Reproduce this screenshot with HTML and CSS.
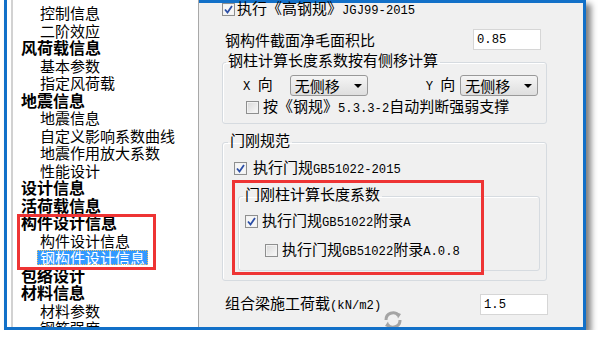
FILE: index.html
```html
<!DOCTYPE html>
<html lang="zh">
<head>
    <meta charset="UTF-8">
    <meta name="viewport" content="width=device-width, initial-scale=1.0">
    <title>钢构件设计信息</title>
    <link rel="stylesheet" href="styles.css">
</head>
<body>
    <div class="frame">
        <div class="tree">
            <ul class="nodes">
                <li class="child">控制信息</li>
                <li class="child">二阶效应</li>
                <li class="top">风荷载信息</li>
                <li class="child">基本参数</li>
                <li class="child">指定风荷载</li>
                <li class="top">地震信息</li>
                <li class="child">地震信息</li>
                <li class="child">自定义影响系数曲线</li>
                <li class="child">地震作用放大系数</li>
                <li class="child">性能设计</li>
                <li class="top">设计信息</li>
                <li class="top">活荷载信息</li>
                <li class="top">构件设计信息</li>
                <li class="child">构件设计信息</li>
                <li class="child"><span class="selected">钢构件设计信息</span></li>
                <li class="top">包络设计</li>
                <li class="top">材料信息</li>
                <li class="child">材料参数</li>
                <li class="child">钢筋强度</li>
            </ul>
            <div class="mark mark-tree"></div>
        </div>

        <div class="panel">
            <div class="row row-first">
                <span class="cb checked"><svg width="11" height="11" viewBox="0 0 11 11"><path d="M2 5.5 L4.5 8.5 L9 2" fill="none" stroke="#2b4ea6" stroke-width="1.8"/></svg></span>
                <span>执行《高钢规》<span class="en">JGJ99-2015</span></span>
            </div>

            <div class="row row-field">
                <span>钢构件截面净毛面积比</span>
                <span class="field"><span class="en">0.85</span></span>
            </div>

            <fieldset class="group group-side">
                <legend>钢柱计算长度系数按有侧移计算</legend>
                <div class="row row-combo">
                    <span class="axis"><span class="en">X </span>向</span>
                    <span class="combo combo-x">无侧移<i class="arrow"></i></span>
                    <span class="axis axis-y"><span class="en">Y </span>向</span>
                    <span class="combo combo-y">无侧移<i class="arrow"></i></span>
                </div>
                <div class="row row-check row-brace">
                    <span class="cb"></span>
                    <span>按《钢规》<span class="en">5.3.3-2</span>自动判断强弱支撑</span>
                </div>
            </fieldset>

            <fieldset class="group group-portal">
                <legend>门刚规范</legend>
                <div class="row row-check row-portal">
                    <span class="cb checked"><svg width="11" height="11" viewBox="0 0 11 11"><path d="M2 5.5 L4.5 8.5 L9 2" fill="none" stroke="#2b4ea6" stroke-width="1.8"/></svg></span>
                    <span>执行门规<span class="en">GB51022-2015</span></span>
                </div>
                <fieldset class="group group-inner">
                    <legend>门刚柱计算长度系数</legend>
                    <div class="row row-check row-appendix">
                        <span class="cb checked"><svg width="11" height="11" viewBox="0 0 11 11"><path d="M2 5.5 L4.5 8.5 L9 2" fill="none" stroke="#2b4ea6" stroke-width="1.8"/></svg></span>
                        <span>执行门规<span class="en">GB51022</span>附录<span class="en">A</span></span>
                    </div>
                    <div class="row row-check row-appendix2">
                        <span class="cb"></span>
                        <span>执行门规<span class="en">GB51022</span>附录<span class="en">A.0.8</span></span>
                    </div>
                </fieldset>
            </fieldset>

            <div class="row row-field row-load">
                <span>组合梁施工荷载<span class="en">(kN/m2)</span></span>
                <span class="field"><span class="en">1.5</span></span>
            </div>

            <div class="mark mark-panel"></div>

            <svg class="busy" width="22" height="22" viewBox="0 0 22 22">
                <path d="M4 11 A7 7 0 0 1 16.5 6.5" fill="none" stroke="#a4a4a4" stroke-width="3"/>
                <path d="M14 3 L19 5 L16 9.5 Z" fill="#a4a4a4"/>
                <path d="M18 11 A7 7 0 0 1 5.5 15.5" fill="none" stroke="#a4a4a4" stroke-width="3"/>
                <path d="M8 19 L3 17 L6 12.5 Z" fill="#a4a4a4"/>
            </svg>
        </div>
    </div>
</body>
</html>
```

FILE: styles.css
```css
body {
    margin: 0;
    padding: 0;
    background: #fff;
    font-family: "Noto Sans CJK SC", "Liberation Sans", sans-serif;
    color: #000;
}

.frame {
    margin-left: 4px;
    width: 582px;
    height: 330px;
    box-sizing: border-box;
    border: 3px solid #1270c8;
    border-top: none;
    display: flex;
    overflow: hidden;
    box-shadow: 5px 4px 6px rgba(0, 0, 0, 0.5);
}

/* 左侧树 */
.tree {
    position: relative;
    width: 192px;
    flex-shrink: 0;
    box-sizing: border-box;
    background: #fff;
    border-right: 1px solid #a8a8a8;
    overflow: hidden;
}

.nodes {
    list-style: none;
    margin: 0 0 0 4px;
    padding: 4px 0 0 8px;
    border-left: 2px solid #d2d2d2;
    height: 100%;
}

.nodes li {
    height: 17.5px;
    line-height: 17.5px;
    white-space: nowrap;
}

.top {
    font-size: 16px;
    font-weight: bold;
}

.child {
    font-size: 15px;
    padding-left: 19px;
}

.selected {
    display: inline-block;
    margin-left: -3px;
    padding: 0 3px;
    height: 15px;
    line-height: 15px;
    background: #3399ff;
    color: #fff;
    outline: 1px dotted #f0c060;
    outline-offset: -1px;
}

/* 红色标注框 */
.mark {
    position: absolute;
    box-sizing: border-box;
    border: 3px solid #ee3434;
}

.mark-tree {
    left: 10px;
    top: 214px;
    width: 139px;
    height: 56px;
}

.mark-panel {
    left: 33px;
    top: 177px;
    width: 252px;
    height: 95px;
}

/* 右侧参数面板 */
.panel {
    position: relative;
    flex: 1;
    background: #f0f0f0;
    border-top: 3px solid #1270c8;
    font-size: 15px;
}

.en {
    font-family: "Liberation Mono", "DejaVu Sans Mono", monospace;
    font-size: 12.2px;
}

.row {
    display: flex;
    align-items: center;
    white-space: nowrap;
    line-height: 16px;
}

.row-first {
    height: 12px;
    margin-left: 23px;
}

.row-first .cb {
    margin-right: 2px;
}

.row-field {
    margin: 14px 0 0 26px;
    width: 316px;
    height: 21px;
    justify-content: space-between;
}

.row-load {
    margin-top: 13px;
    width: 323px;
}

.field {
    width: 68px;
    height: 21px;
    box-sizing: border-box;
    padding-left: 3px;
    background: #fff;
    border: 1px solid #d6d6d6;
    display: flex;
    align-items: center;
}

.cb {
    width: 13px;
    height: 13px;
    box-sizing: border-box;
    flex-shrink: 0;
    margin-right: 4px;
    border: 1px solid #8e8f8f;
    background: linear-gradient(135deg, #d8d8d8, #fafafa);
    box-shadow: inset 0 0 0 1px #f2f2f2;
    display: flex;
    align-items: center;
    justify-content: center;
}

.cb.checked {
    background: #f6f6f6;
}

.group {
    margin: 0;
    padding: 0;
    border: 1px solid #d6dbe0;
    border-radius: 3px;
    box-shadow: inset 1px 1px 0 #fff;
    min-width: 0;
}

.group legend {
    padding: 0 2px 4px 2px;
    line-height: 16px;
    height: 20px;
    box-sizing: border-box;
}

.group-side {
    margin: 2px 0 0 23px;
    width: 325px;
    box-sizing: border-box;
    padding: 3px 0 9px 0;
}

.group-side legend {
    margin-left: 3px;
}

.row-combo {
    height: 21px;
    margin-left: 20px;
}

.axis-y {
    margin-left: 58px;
}

.combo {
    width: 78px;
    height: 21px;
    box-sizing: border-box;
    padding-left: 4px;
    border: 1px solid #999;
    border-radius: 3px;
    background: linear-gradient(#f5f5f5, #dedede);
    display: flex;
    align-items: center;
}

.combo-x {
    margin-left: 17px;
}

.combo-y {
    margin-left: 5px;
}

.arrow {
    margin-left: auto;
    margin-right: 5px;
    width: 0;
    height: 0;
    border-left: 4px solid transparent;
    border-right: 4px solid transparent;
    border-top: 4px solid #000;
}

.row-check {
    height: 14px;
}

.row-brace {
    margin: 4px 0 0 23px;
}

.group-portal {
    margin: 8px 0 0 23px;
    width: 325px;
    box-sizing: border-box;
    padding: 9px 6px 9px 0;
}

.group-portal > legend {
    margin-left: 5px;
}

.row-portal {
    margin-left: 11px;
}

.row-portal .cb {
    margin-right: 6px;
}

.group-inner {
    margin: 11px 0 0 15px;
    padding: 8px 0 13px 0;
}

.group-inner legend {
    margin-left: 4px;
}

.row-appendix {
    margin-left: 6px;
}

.row-appendix2 {
    margin: 15px 0 0 26px;
}

.busy {
    position: absolute;
    left: 183px;
    top: 306px;
}
```
